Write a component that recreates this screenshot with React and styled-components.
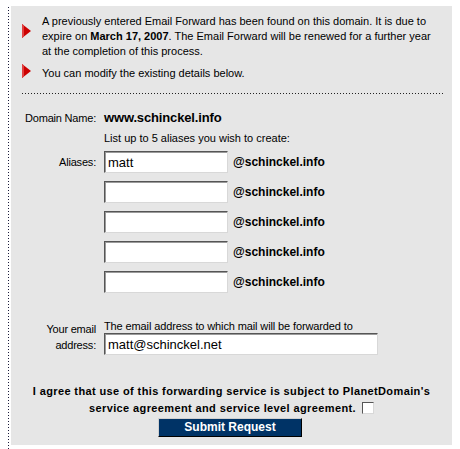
import React from 'react';
import styled, { createGlobalStyle } from 'styled-components';

const GlobalStyle = createGlobalStyle`
    html, body {
        margin: 0;
        padding: 0;
        background: #ffffff;
        font-family: "Liberation Sans", Arial, sans-serif;
        font-size: 11px;
        color: #000;
    }
`;

const Page = styled.div`
    height: 449px;
    margin-left: 8px;
    padding-left: 3px;
    background-image: linear-gradient(to bottom, #1a1a3a 34%, transparent 34%);
    background-size: 1px 3px;
    background-repeat: repeat-y;
    background-position: 0 1px;
`;

const Panel = styled.div`
    width: 441px;
    height: 439px;
    margin-top: 6px;
    background: #e6e6e6;
    box-sizing: border-box;
    padding-top: 8px;
`;

const Notice = styled.div`
    display: flex;
    align-items: flex-start;
    padding-left: 11px;
    margin-bottom: ${({ $gap }) => $gap || 0}px;
`;

const Arrow = styled.svg`
    flex: none;
    width: 9px;
    height: 14px;
    margin-top: ${({ $top }) => $top}px;
    margin-right: 11px;
`;

const NoticeText = styled.p`
    flex: 1;
    margin: 0;
    padding-right: 2px;
    line-height: 15px;
`;

const Divider = styled.div`
    height: 1px;
    margin: 12px 7px 0 11px;
    background-image: linear-gradient(to right, #222 34%, transparent 34%);
    background-size: 3px 1px;
    background-repeat: repeat-x;
`;

const Form = styled.div`
    padding-top: 16px;
`;

const Row = styled.div`
    display: grid;
    grid-template-columns: 85px 1fr;
    column-gap: 8px;
    align-items: center;
    margin-top: ${({ $top }) => $top || 0}px;
    margin-bottom: ${({ $gap }) => $gap || 0}px;
`;

const Label = styled.div`
    text-align: right;
    line-height: 16px;
    letter-spacing: -0.2px;
`;

const Value = styled.div`
    display: flex;
    align-items: center;
    line-height: ${({ $lh }) => $lh || 15}px;
`;

const Domain = styled.span`
    font-size: 13px;
    font-weight: bold;
    letter-spacing: -0.15px;
`;

const TextBox = styled.input`
    box-sizing: border-box;
    width: ${({ $w }) => $w}px;
    height: 22px;
    margin: 0;
    padding: 1px 3px 0;
    background: #fff;
    border: 1px solid;
    border-color: #555 #d8d8d8 #d8d8d8 #555;
    box-shadow: inset 1px 1px 0 #9a9a9a;
    font-family: "Liberation Sans", Arial, sans-serif;
    font-size: 13px;
    color: #000;
    outline: none;
`;

const Suffix = styled.span`
    margin-left: 5px;
    font-size: 12px;
    font-weight: bold;
`;

const Column = styled.div`
    display: flex;
    flex-direction: column;
    align-items: flex-start;
`;

const Note = styled.div`
    line-height: 14px;
    letter-spacing: -0.12px;
`;

const Agree = styled.p`
    margin: 28px 0 0;
    text-align: center;
    font-weight: bold;
    line-height: 17px;
    letter-spacing: 0.38px;
`;

const Check = styled.input`
    appearance: none;
    width: 12px;
    height: 12px;
    margin: 0 0 0 6px;
    vertical-align: -2px;
    background: #fff;
    border: 1px solid;
    border-color: #555 #d8d8d8 #d8d8d8 #555;
`;

const Actions = styled.div`
    display: flex;
    justify-content: center;
    margin-top: 1px;
    padding-right: 3px;
`;

const Submit = styled.button`
    width: 144px;
    height: 19px;
    padding: 0;
    background: #003366;
    color: #fff;
    border: 1px solid;
    border-color: #d0d0d0 #000 #000 #d0d0d0;
    font-family: "Liberation Sans", Arial, sans-serif;
    font-size: 12px;
    font-weight: bold;
    line-height: 15px;
`;

const RedArrow = ({ top }) => (
    <Arrow $top={top} viewBox="0 0 9 14">
        <polygon points="0,0 9,7 0,14" fill="#cc0000" />
        <polygon points="0,0 2,1.5 2,12.5 0,14" fill="#e04040" />
    </Arrow>
);

const aliases = ['matt', '', '', '', ''];

export default function App() {
    return (
        <>
            <GlobalStyle />
            <Page>
                <Panel>
                    <Notice $gap={7}>
                        <RedArrow top={10} />
                        <NoticeText>
                            A previously entered Email Forward has been found on this domain. It is due to<br />
                            expire on <b>March 17, 2007</b>. The Email Forward will be renewed for a further year<br />
                            at the completion of this process.
                        </NoticeText>
                    </Notice>
                    <Notice>
                        <RedArrow top={-2} />
                        <NoticeText>You can modify the existing details below.</NoticeText>
                    </Notice>
                    <Divider />

                    <Form>
                        <Row $gap={5}>
                            <Label>Domain Name:</Label>
                            <Value $lh={16}><Domain>www.schinckel.info</Domain></Value>
                        </Row>
                        <Row $gap={5}>
                            <div />
                            <Value>List up to 5 aliases you wish to create:</Value>
                        </Row>
                        {aliases.map((alias, i) => (
                            <Row key={i} $gap={8}>
                                <Label>{i === 0 ? 'Aliases:' : ''}</Label>
                                <Value>
                                    <TextBox $w={124} defaultValue={alias} />
                                    <Suffix>@schinckel.info</Suffix>
                                </Value>
                            </Row>
                        ))}
                        <Row $top={26}>
                            <Label>Your email<br />address:</Label>
                            <Column>
                                <Note>The email address to which mail will be forwarded to</Note>
                                <TextBox $w={274} defaultValue="matt@schinckel.net" />
                            </Column>
                        </Row>
                    </Form>

                    <Agree>
                        I agree that use of this forwarding service is subject to PlanetDomain's<br />
                        service agreement and service level agreement.
                        <Check type="checkbox" />
                    </Agree>
                    <Actions>
                        <Submit type="button">Submit Request</Submit>
                    </Actions>
                </Panel>
            </Page>
        </>
    );
}
